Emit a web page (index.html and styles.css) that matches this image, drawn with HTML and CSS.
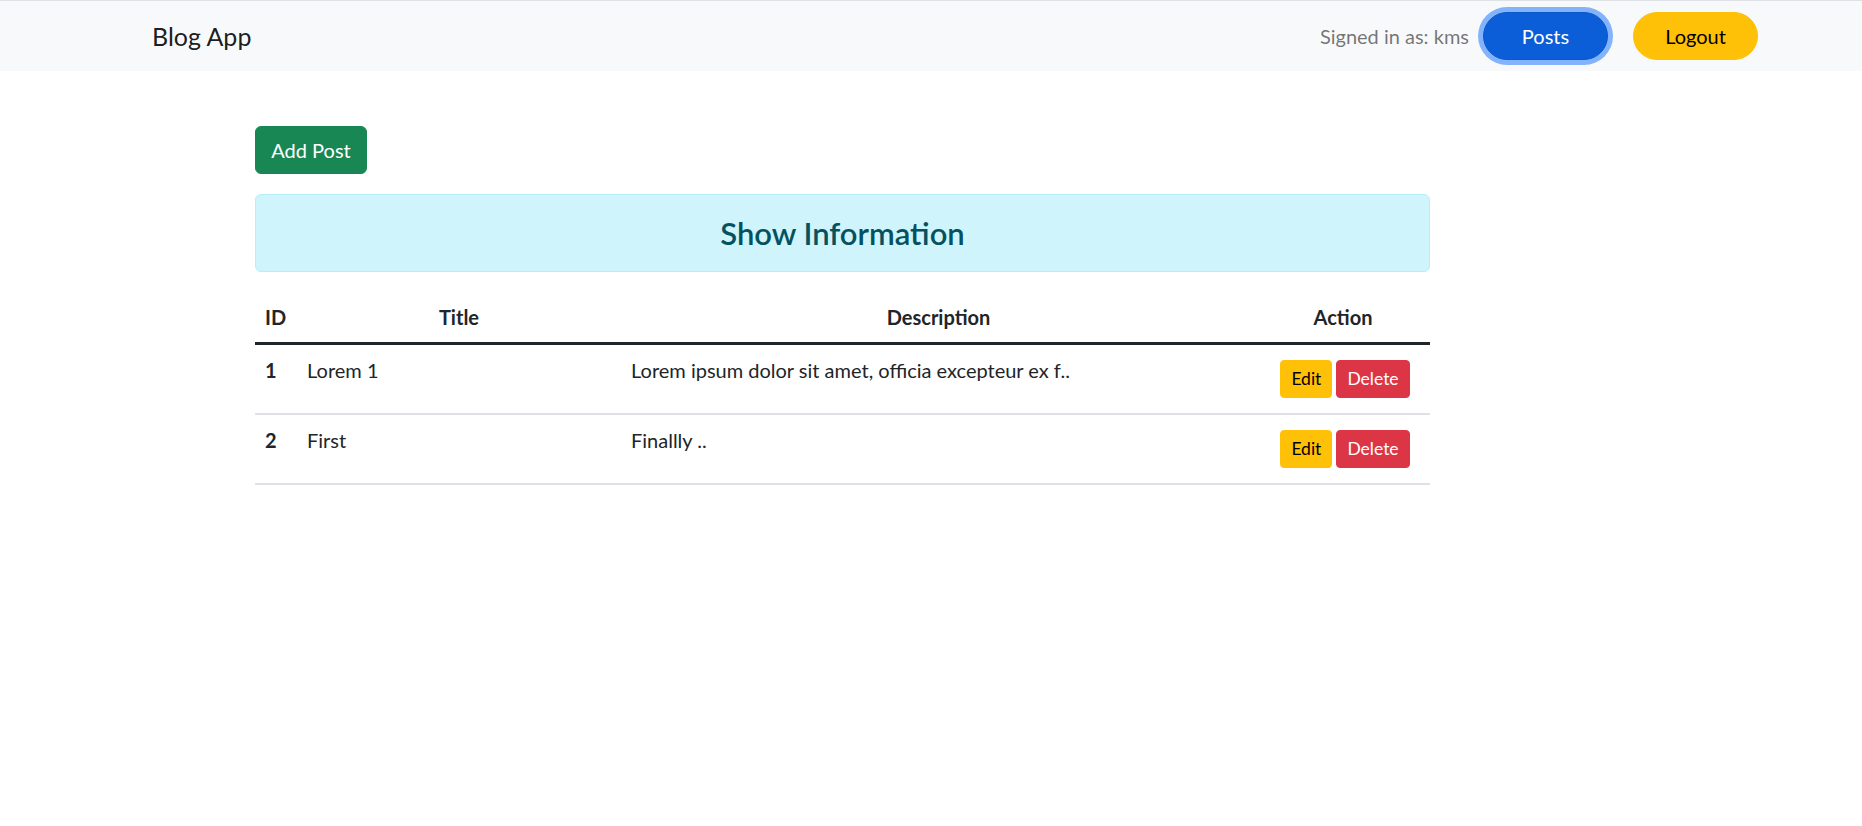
FILE: index.html
```html
<!DOCTYPE html>
<html lang="en">
<head>
<meta charset="utf-8">
<title>Blog App</title>
<link rel="stylesheet" href="styles.css">
</head>
<body>
<header class="navbar">
  <a class="brand" href="#">Blog App</a>
  <div class="nav-right">
    <span class="signed">Signed in as: kms</span>
    <a class="pill pill-posts" href="#">Posts</a>
    <a class="pill pill-logout" href="#">Logout</a>
  </div>
</header>
<main class="content">
  <div class="toolbar">
    <a class="btn-add" href="#">Add Post</a>
  </div>
  <div class="alert-info">
    <h4 class="alert-title">Show Information</h4>
  </div>
  <table class="posts">
    <colgroup>
      <col class="c-id">
      <col class="c-title">
      <col class="c-desc">
      <col class="c-action">
    </colgroup>
    <thead>
      <tr>
        <th class="h-id">ID</th>
        <th class="h-center">Title</th>
        <th class="h-center">Description</th>
        <th class="h-center">Action</th>
      </tr>
    </thead>
    <tbody>
      <tr>
        <th class="row-id">1</th>
        <td>Lorem 1</td>
        <td>Lorem ipsum dolor sit amet, officia excepteur ex f..</td>
        <td class="actions"><div class="btn-group"><a class="btn-sm btn-edit" href="#">Edit</a><a class="btn-sm btn-delete" href="#">Delete</a></div></td>
      </tr>
      <tr>
        <th class="row-id">2</th>
        <td>First</td>
        <td>Finallly ..</td>
        <td class="actions"><div class="btn-group"><a class="btn-sm btn-edit" href="#">Edit</a><a class="btn-sm btn-delete" href="#">Delete</a></div></td>
      </tr>
    </tbody>
  </table>
</main>
</body>
</html>
```
FILE: styles.css
```css
* {
  box-sizing: border-box;
}

html, body {
  margin: 0;
  padding: 0;
  background: #ffffff;
}

body {
  font-family: Lato, "Liberation Sans", sans-serif;
  font-size: 20px;
  line-height: 30px;
  color: #212529;
}

a {
  text-decoration: none;
}

/* Navbar */
.navbar {
  display: flex;
  align-items: center;
  justify-content: space-between;
  height: 71px;
  border-top: 1px solid #dee2e6;
  background: #f8f9fa;
  padding: 0 104px 0 152px;
}

.brand {
  font-size: 25px;
  line-height: 36px;
  color: rgba(0, 0, 0, 0.9);
}

.nav-right {
  display: flex;
  align-items: center;
}

.signed {
  color: rgba(0, 0, 0, 0.55);
  font-size: 20px;
  margin-right: 14px;
}

.pill {
  display: inline-block;
  width: 125px;
  height: 48px;
  line-height: 46px;
  border: 1px solid transparent;
  border-radius: 50rem;
  text-align: center;
  font-size: 20px;
}

.pill-posts {
  background: #0b5ed7;
  border-color: #0a58ca;
  color: #ffffff;
  box-shadow: 0 0 0 5px rgba(13, 110, 253, 0.5);
  margin-right: 25px;
}

.pill-logout {
  background: #ffc107;
  border-color: #ffc107;
  color: #000000;
}

/* Content */
.content {
  width: 1175px;
  margin-left: 255px;
  padding-top: 55px;
}

.toolbar {
  display: flex;
}

.btn-add {
  display: inline-block;
  width: 112px;
  height: 48px;
  line-height: 46px;
  text-align: center;
  background: #198754;
  border: 1px solid #198754;
  border-radius: 6px;
  color: #ffffff;
  font-size: 20px;
}

.alert-info {
  margin-top: 20px;
  background: #cff4fc;
  border: 1px solid #b6effb;
  border-radius: 6px;
  padding: 20px;
}

.alert-title {
  margin: 0;
  text-align: center;
  font-size: 31px;
  line-height: 36px;
  font-weight: 600;
  color: #055160;
}

/* Table */
.posts {
  margin-top: 20px;
  width: 1175px;
  border-collapse: collapse;
  table-layout: fixed;
}

.c-id { width: 42px; }
.c-title { width: 324px; }
.c-desc { width: 635px; }
.c-action { width: 174px; }

.posts th,
.posts td {
  padding: 10px;
  vertical-align: top;
  text-align: left;
  font-size: 20px;
  line-height: 30px;
}

.posts thead th {
  font-weight: 700;
  border-bottom: 3px solid #212529;
}

.posts .h-center {
  text-align: center;
}

.posts tbody tr {
  border-bottom: 2px solid #dee2e6;
}

.posts .row-id {
  font-weight: 700;
}

.posts td.actions {
  text-align: center;
  padding-left: 12px;
  padding-right: 8px;
}

.btn-group {
  display: flex;
  justify-content: center;
  gap: 4px;
  padding: 5px 0;
}

.btn-sm {
  display: inline-block;
  height: 38px;
  line-height: 36px;
  padding: 0 10px;
  border: 1px solid transparent;
  border-radius: 4px;
  font-size: 17.5px;
}

.btn-edit {
  background: #ffc107;
  border-color: #ffc107;
  color: #000000;
}

.btn-delete {
  background: #dc3545;
  border-color: #dc3545;
  color: #ffffff;
}
```
